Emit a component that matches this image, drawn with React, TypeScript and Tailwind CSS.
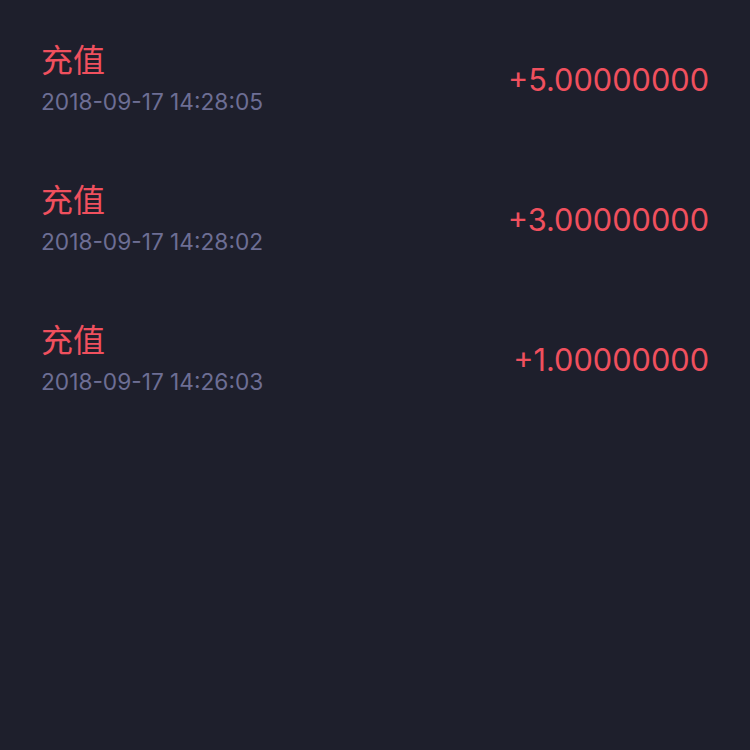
import React from "react";

const records = [
  { title: "充值", time: "2018-09-17 14:28:05", amount: "+5.00000000" },
  { title: "充值", time: "2018-09-17 14:28:02", amount: "+3.00000000" },
  { title: "充值", time: "2018-09-17 14:26:03", amount: "+1.00000000" },
];

const App = () => {
  return (
    <div className="min-h-[750px] w-full bg-[#1e1f2c] pt-[10px] font-['Inter','Noto_Sans_CJK_SC',sans-serif]">
      {records.map((r, i) => (
        <div key={i} className="flex h-[140px] items-center justify-between px-[41px]">
          <div className="flex flex-col pb-[4px]">
            <div className="text-[32px] leading-[40px] text-[#f0505e]">{r.title}</div>
            <div className="mt-[8px] text-[22.7px] leading-[26px] text-[#6d6e94]">{r.time}</div>
          </div>
          <div className="text-[30.7px] text-[#f0505e]">{r.amount}</div>
        </div>
      ))}
    </div>
  );
};

export default App;
